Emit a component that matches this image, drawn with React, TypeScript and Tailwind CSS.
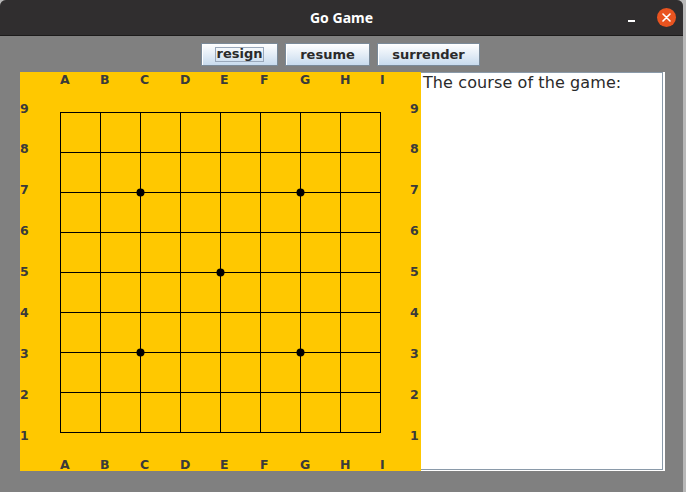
import React from "react";

const LETTERS = ["A", "B", "C", "D", "E", "F", "G", "H", "I"];
const STARS: [number, number][] = [
  [2, 2],
  [6, 2],
  [4, 4],
  [2, 6],
  [6, 6],
];

function Board() {
  const lines = [];
  for (let i = 0; i < 9; i++) {
    const p = 40 + 40 * i + 0.5;
    lines.push(<line key={"v" + i} x1={p} y1={40} x2={p} y2={361} stroke="#000" strokeWidth={1} />);
    lines.push(<line key={"h" + i} x1={40} y1={p} x2={361} y2={p} stroke="#000" strokeWidth={1} />);
  }
  return (
    <svg width={401} height={399} className="block bg-[#ffc800]" style={{ fontFamily: '"DejaVu Sans", sans-serif' }}>
      {lines}
      {STARS.map(([c, r], k) => (
        <circle key={k} cx={40 + 40 * c + 0.5} cy={40 + 40 * r + 0.5} r={4} fill="#000" />
      ))}
      {LETTERS.map((l, i) => (
        <React.Fragment key={l}>
          <text x={40 + 40 * i} y={12} fontSize={12.5} fontWeight="bold" fill="#3a3a3a">{l}</text>
          <text x={40 + 40 * i} y={397} fontSize={12.5} fontWeight="bold" fill="#3a3a3a">{l}</text>
        </React.Fragment>
      ))}
      {Array.from({ length: 9 }).map((_, j) => (
        <React.Fragment key={j}>
          <text x={0} y={Math.round(40.5 + 40.9 * j)} fontSize={12.5} fontWeight="bold" fill="#3a3a3a">{9 - j}</text>
          <text x={390} y={Math.round(40.5 + 40.9 * j)} fontSize={12.5} fontWeight="bold" fill="#3a3a3a">{9 - j}</text>
        </React.Fragment>
      ))}
    </svg>
  );
}

function Btn({ label, w, focused }: { label: string; w: string; focused?: boolean }) {
  return (
    <div
      className={`${w} h-[23px] flex items-center justify-center border border-[#7a8a99] bg-gradient-to-b from-[#ffffff] to-[#c8dbee] shadow-[inset_1px_1px_0_#ffffff] text-[13px] font-bold text-[#2a2a2a] font-['DejaVu_Sans',sans-serif]`}
    >
      <span className={focused ? "border border-[#99a8bb] px-[1px] leading-[12px] pb-[1px]" : "leading-[14px]"}>{label}</span>
    </div>
  );
}

export default function App() {
  return (
    <div className="w-[686px] h-[492px] bg-[#b8b8b8] overflow-hidden">
      <div className="w-[683px] h-[492px] bg-[#808080] flex flex-col rounded-t-[6px] overflow-hidden">
        <div className="h-[36px] shrink-0 bg-[#302e2f] border-b border-[#1c1b1b] relative flex items-center justify-center">
          <span className="text-white font-bold text-[14px] font-['Noto_Sans',sans-serif]">Go Game</span>
          <div className="absolute left-[628px] top-[20px] w-[7px] h-[2px] bg-white" />
          <div className="absolute left-[657px] top-[8px] w-[19px] h-[19px] rounded-full bg-[#e95420] flex items-center justify-center">
            <svg width="9" height="9" viewBox="0 0 9 9">
              <path d="M1 1 L8 8 M8 1 L1 8" stroke="#fff" strokeWidth="1.6" strokeLinecap="round" />
            </svg>
          </div>
        </div>
        <div className="flex justify-center gap-[7px] pt-[7px] pr-[2px]">
          <Btn label="resign" w="w-[77px]" focused />
          <Btn label="resume" w="w-[85px]" />
          <Btn label="surrender" w="w-[103px]" />
        </div>
        <div className="flex pt-[6px] pl-[20px]">
          <Board />
          <div className="w-[244px] h-[399px] bg-white border-r border-b border-white">
            <div className="w-[242px] h-[398px] border-t border-r border-b border-[#8a9aa9] bg-white">
              <div className="pl-[2px] pt-[1px] text-[16px] leading-[18px] tracking-[0.1px] text-[#2a2a2a] font-['DejaVu_Sans',sans-serif]">
                The course of the game:
              </div>
            </div>
          </div>
        </div>
      </div>
    </div>
  );
}
